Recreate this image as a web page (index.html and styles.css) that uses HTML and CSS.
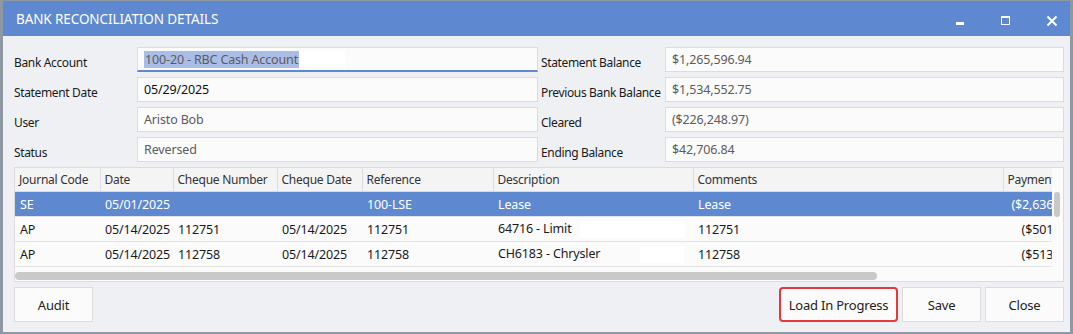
FILE: index.html
```html
<!DOCTYPE html>
<html lang="en">
<head>
  <meta charset="UTF-8">
  <title>Bank Reconciliation Details</title>
  <link rel="stylesheet" href="styles.css">
</head>
<body>
  <div class="window">
    <div class="titlebar">
      <span class="title">BANK RECONCILIATION DETAILS</span>
      <div class="controls">
        <svg width="46" height="34" viewBox="0 0 46 34"><rect x="24" y="20" width="8" height="3" fill="#fff"/></svg>
        <svg width="46" height="34" viewBox="0 0 46 34"><rect x="23.5" y="14.5" width="8" height="8" fill="none" stroke="#fff"/><rect x="23" y="14" width="9" height="2" fill="#fff"/></svg>
        <svg width="46" height="34" viewBox="0 0 46 34"><path d="M23.5 14.5 L32.5 23.5 M32.5 14.5 L23.5 23.5" stroke="#fff" stroke-width="2"/></svg>
      </div>
    </div>

    <div class="content">
      <div class="form">
        <label>Bank Account</label>
        <div class="field focus"><span class="sel">100-20 - RBC Cash Account</span><span class="mask"></span></div>
        <label>Statement Balance</label>
        <div class="field ro">$1,265,596.94</div>

        <label>Statement Date</label>
        <div class="field">05/29/2025</div>
        <label>Previous Bank Balance</label>
        <div class="field ro">$1,534,552.75</div>

        <label>User</label>
        <div class="field ro">Aristo Bob</div>
        <label>Cleared</label>
        <div class="field ro">($226,248.97)</div>

        <label>Status</label>
        <div class="field ro">Reversed</div>
        <label>Ending Balance</label>
        <div class="field ro">$42,706.84</div>
      </div>

      <div class="grid">
        <table>
          <colgroup>
            <col style="width:85px"><col style="width:73px"><col style="width:104px"><col style="width:85px">
            <col style="width:131px"><col style="width:200px"><col style="width:310px"><col style="width:90px">
          </colgroup>
          <thead>
            <tr>
              <th>Journal Code</th><th>Date</th><th>Cheque Number</th><th>Cheque Date</th>
              <th>Reference</th><th>Description</th><th>Comments</th><th>Payments</th>
            </tr>
          </thead>
          <tbody>
            <tr class="selected">
              <td>SE</td><td>05/01/2025</td><td></td><td></td>
              <td>100-LSE</td><td>Lease</td><td>Lease</td><td class="num">($2,636.00)</td>
            </tr>
            <tr>
              <td>AP</td><td>05/14/2025</td><td>112751</td><td>05/14/2025</td>
              <td>112751</td><td>64716 - Limit<span class="mask m1"></span></td><td>112751</td><td class="num">($501.00)</td>
            </tr>
            <tr>
              <td>AP</td><td>05/14/2025</td><td>112758</td><td>05/14/2025</td>
              <td>112758</td><td>CH6183 - Chrysler<span class="mask m2"></span></td><td>112758</td><td class="num">($513.00)</td>
            </tr>
          </tbody>
        </table>
        <div class="vscroll"><div class="vthumb"></div></div>
        <div class="hscroll"><div class="hthumb"></div></div>
      </div>

      <div class="actions">
        <button>Audit</button>
        <div class="spacer"></div>
        <button class="flagged">Load In Progress</button>
        <button>Save</button>
        <button>Close</button>
      </div>
    </div>
  </div>
</body>
</html>
```

FILE: styles.css
```css
body {
  margin: 0;
  background-color: #8e98a3;
  font-family: "Noto Sans", "Open Sans", sans-serif;
  font-size: 12px;
  color: #1a1a1a;
}
.window {
  margin: 1px 3px 0 3px;
  width: 1067px;
  height: 331px;
  background-color: #eff0f4;
  display: flex;
  flex-direction: column;
  overflow: hidden;
}
.titlebar {
  height: 35px;
  background-color: #5e88cf;
  display: flex;
  align-items: center;
  justify-content: space-between;
  flex-shrink: 0;
}
.title {
  color: #fff;
  font-size: 13.5px;
  padding-left: 13px;
  letter-spacing: -0.1px;
}
.controls {
  display: flex;
  align-items: center;
}
.controls svg {
  display: block;
}
.content {
  padding: 11px 5px 0 11px;
}
.form {
  display: grid;
  grid-template-columns: 123px 401px 127px 399px;
  grid-auto-rows: 25px;
  row-gap: 5px;
  align-items: stretch;
}
.form label {
  display: flex;
  align-items: center;
  padding-top: 5px;
  white-space: nowrap;
  letter-spacing: -0.35px;
}
.form label:nth-child(4n+3) {
  padding-left: 3px;
}
.field {
  background-color: #fbfbfb;
  border: 1px solid #dcdcdc;
  padding: 0 6px;
  display: flex;
  align-items: center;
  white-space: nowrap;
  color: #111;
  font-size: 12.5px;
  letter-spacing: -0.15px;
}
.field.ro {
  color: #5c5c5c;
}
.field.focus {
  border-bottom: 2px solid #5e88cf;
  color: #5c5c5c;
}
.sel {
  background-color: #a9bde6;
  padding: 0 1px;
}
.mask {
  display: inline-block;
  width: 46px;
  height: 17px;
  background-color: #ffffff;
}
.grid {
  position: relative;
  margin-top: 5px;
  width: 1050px;
  height: 115px;
  background-color: #fbfbfb;
  border: 1px solid #dcdcdc;
  box-sizing: border-box;
  overflow: hidden;
}
table {
  border-collapse: collapse;
  table-layout: fixed;
  width: 1078px;
}
th {
  height: 23px;
  background-color: #f4f4f5;
  font-weight: normal;
  text-align: left;
  padding: 0 4px;
  border-right: 1px solid #dcdcdc;
  border-bottom: 1px solid #dcdcdc;
  color: #333;
  white-space: nowrap;
  overflow: hidden;
  letter-spacing: -0.25px;
}
td {
  height: 24px;
  padding: 0 5px;
  border-bottom: 1px solid #e3e3e3;
  white-space: nowrap;
  overflow: hidden;
  font-size: 12.5px;
  letter-spacing: -0.15px;
}
td.num {
  text-align: right;
  padding-right: 19px;
}
tr.selected td {
  background-color: #5e88cf;
  color: #fff;
}
td .mask.m1 {
  width: 105px;
  margin-left: 8px;
  vertical-align: middle;
}
td .mask.m2 {
  width: 44px;
  margin-left: 40px;
  vertical-align: middle;
}
.vscroll {
  position: absolute;
  top: 0;
  right: 0;
  width: 11px;
  height: 100px;
  background-color: #fbfbfb;
}
.vthumb {
  margin: 24px 0 0 2px;
  width: 6px;
  height: 25px;
  border-radius: 3px;
  background-color: #c8c8c8;
}
.hscroll {
  position: absolute;
  left: 0;
  bottom: 1px;
  width: 100%;
  height: 8px;
}
.hthumb {
  width: 862px;
  height: 8px;
  border-radius: 4px;
  background-color: #c9c9c9;
}
.actions {
  display: flex;
  gap: 4px;
  margin-top: 5px;
  width: 1050px;
}
.spacer {
  flex: 1;
}
button {
  font-family: inherit;
  font-size: 13px;
  height: 35px;
  width: 79px;
  background-color: #fbfbfb;
  border: 1px solid #dcdcdc;
  color: #222;
  padding: 0;
  letter-spacing: -0.2px;
}
button.flagged {
  width: 119px;
  border: 2px solid #e4383e;
  border-radius: 4px;
}
```
